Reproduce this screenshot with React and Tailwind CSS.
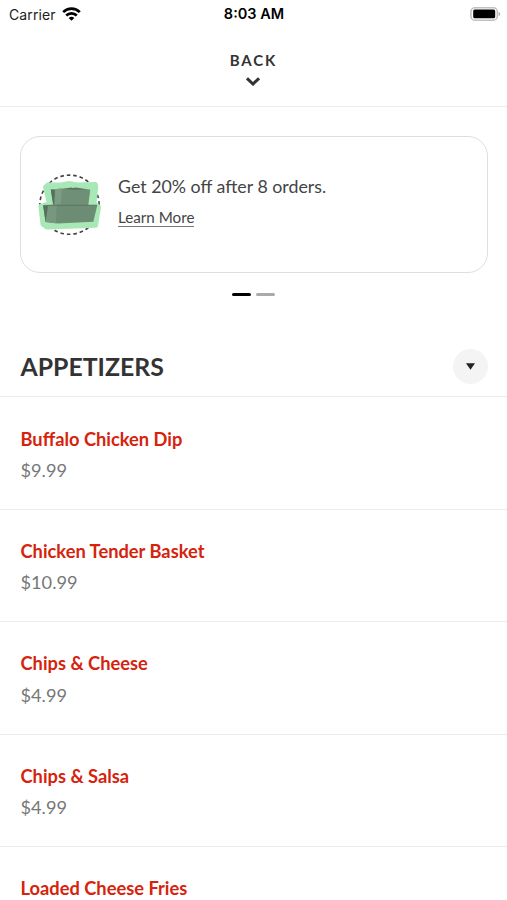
const menuItems = [
  { name: 'Buffalo Chicken Dip', price: '$9.99' },
  { name: 'Chicken Tender Basket', price: '$10.99' },
  { name: 'Chips & Cheese', price: '$4.99' },
  { name: 'Chips & Salsa', price: '$4.99' },
  { name: 'Loaded Cheese Fries' },
]

function WifiIcon() {
  return (
    <svg width="19" height="14" viewBox="0 0 19 14" fill="none" stroke="#000" strokeWidth="2.7">
      <path d="M1.2 5.1a11.8 11.8 0 0 1 16.6 0" />
      <path d="M4.2 8.5a7.5 7.5 0 0 1 10.6 0" />
      <path d="M9.5 13.8 6.7 11a4 4 0 0 1 5.6 0z" fill="#000" stroke="none" />
    </svg>
  )
}

function BatteryIcon() {
  return (
    <svg width="31" height="14" viewBox="0 0 31 14">
      <rect x="0.9" y="0.8" width="26.4" height="12.4" rx="4" fill="#fff" stroke="#c0c0c0" strokeWidth="1.6" />
      <rect x="3.2" y="2.6" width="22" height="8.6" rx="1.5" fill="#000" />
      <path d="M28.6 4.8c2 .8 2 3.6 0 4.4z" fill="#a8a8a8" />
    </svg>
  )
}

function BoxesIcon() {
  return (
    <svg width="64" height="66" viewBox="0 0 64 66" className="shrink-0">
      <circle cx="31.5" cy="32.7" r="29.6" fill="none" stroke="#444" strokeWidth="1.6" strokeDasharray="3.6 2.9" />
      <path
        d="M9.5 12.6 23 12.4 31 11 39 12.4 57.5 12 58.3 14 56.5 31.5 61 35 58 53.8 8.5 55.4 4.5 52.5 2.4 34 11 31.5 7 15z"
        fill="#a8e8b6"
        stroke="#a8e8b6"
        strokeWidth="4"
        strokeLinejoin="round"
      />
      {/* top box */}
      <path d="M12.8 17.4 24 16.6 52.3 17.8 50.3 33H15.5z" fill="#6f8f77" />
      <path d="M12.8 17.4 24 16.6 22.7 33H15.5z" fill="#7c9c83" />
      <path d="M12.8 17.4 17 18.2 16.2 33 15 32z" fill="#55705c" />
      <path d="M25 16.8 33 15.4 35 16.1 38 15.5 52.3 17.8 35 17.7z" fill="#597660" />
      {/* bottom box */}
      <path d="M5.2 33.6 18.7 32.6 59.3 33.3 55.3 49.8 20 51.5 7.6 50z" fill="#6c8c74" />
      <path d="M5.2 33.6 18.7 32.6 18 51.3 7.6 50z" fill="#78977f" />
      <path d="M5.2 33.6 10 34.2 7.6 50z" fill="#55705c" />
      <path d="M6 33.4 59 33.2" stroke="#55705c" strokeWidth="0.8" />
    </svg>
  )
}

function StatusBar() {
  return (
    <div className="grid h-7 grid-cols-3 items-center pl-[9px] pr-[6px] font-['Inter','Liberation_Sans',sans-serif] text-[14px] text-[#222]">
      <div className="flex items-center gap-[6px]">
        <span className="tracking-[0.1px]">Carrier</span>
        <WifiIcon />
      </div>
      <div className="-ml-[2px] text-center text-[14.5px] font-semibold text-black">8:03 AM</div>
      <div className="flex justify-end">
        <BatteryIcon />
      </div>
    </div>
  )
}

export default function App() {
  return (
    <div className="h-[900px] w-[507px] overflow-hidden bg-white font-['Lato',sans-serif] text-[#333]">
      <StatusBar />

      <header className="flex h-[79px] flex-col items-center border-b border-[#ececec] pt-[22px] pr-[1px]">
        <span className="pl-[1px] text-[15px] font-bold leading-5 tracking-[1.9px]">BACK</span>
        <svg width="14" height="9" viewBox="0 0 14 9" className="mt-[7px]" fill="none" stroke="#333" strokeWidth="3">
          <path d="M1 1.3 7 7 13 1.3" />
        </svg>
      </header>

      {/* Promo */}
      <section className="pl-5 pr-[19px] pt-[29px]">
        <div className="flex h-[137px] items-center gap-[16px] rounded-[20px] border border-[#dedede] pl-[17px]">
          <BoxesIcon />
          <div className="-mt-[6px] text-[#444]">
            <p className="-mt-px text-[17.8px] leading-6">Get 20% off after 8 orders.</p>
            <a className="mt-[11px] inline-block border-b border-[#777] text-[15.2px] leading-[17px]">Learn More</a>
          </div>
        </div>
        <div className="mt-[20px] flex justify-center gap-[5px] pr-[1px]">
          <span className="h-[3px] w-[19px] rounded-sm bg-black" />
          <span className="h-[3px] w-[19px] rounded-sm bg-[#aaa]" />
        </div>
      </section>

      {/* Menu */}
      <section className="mt-[40px]">
        <div className="flex h-[61px] items-center justify-between border-b border-[#ececec] pl-[20.5px] pr-[19px]">
          <h2 className="pt-[2px] text-[24.8px] font-bold">APPETIZERS</h2>
          <button className="flex size-[35px] items-center justify-center rounded-full bg-[#f4f4f4]">
            <svg width="9" height="7" viewBox="0 0 9 7">
              <path d="M0 0.3h9L4.5 6.8z" fill="#222" />
            </svg>
          </button>
        </div>
        <ul className="pt-[0.6px]">
          {menuItems.map((item) => (
            <li key={item.name} className="h-[112.4px] border-b border-[#ececec] pl-[20.5px] pt-[29px]">
              <p className="text-[18.3px] font-bold leading-6 text-[#d5230d]">{item.name}</p>
              {item.price && <p className="mt-[7.5px] text-[18.2px] leading-6 text-[#777]">{item.price}</p>}
            </li>
          ))}
        </ul>
      </section>
    </div>
  )
}
